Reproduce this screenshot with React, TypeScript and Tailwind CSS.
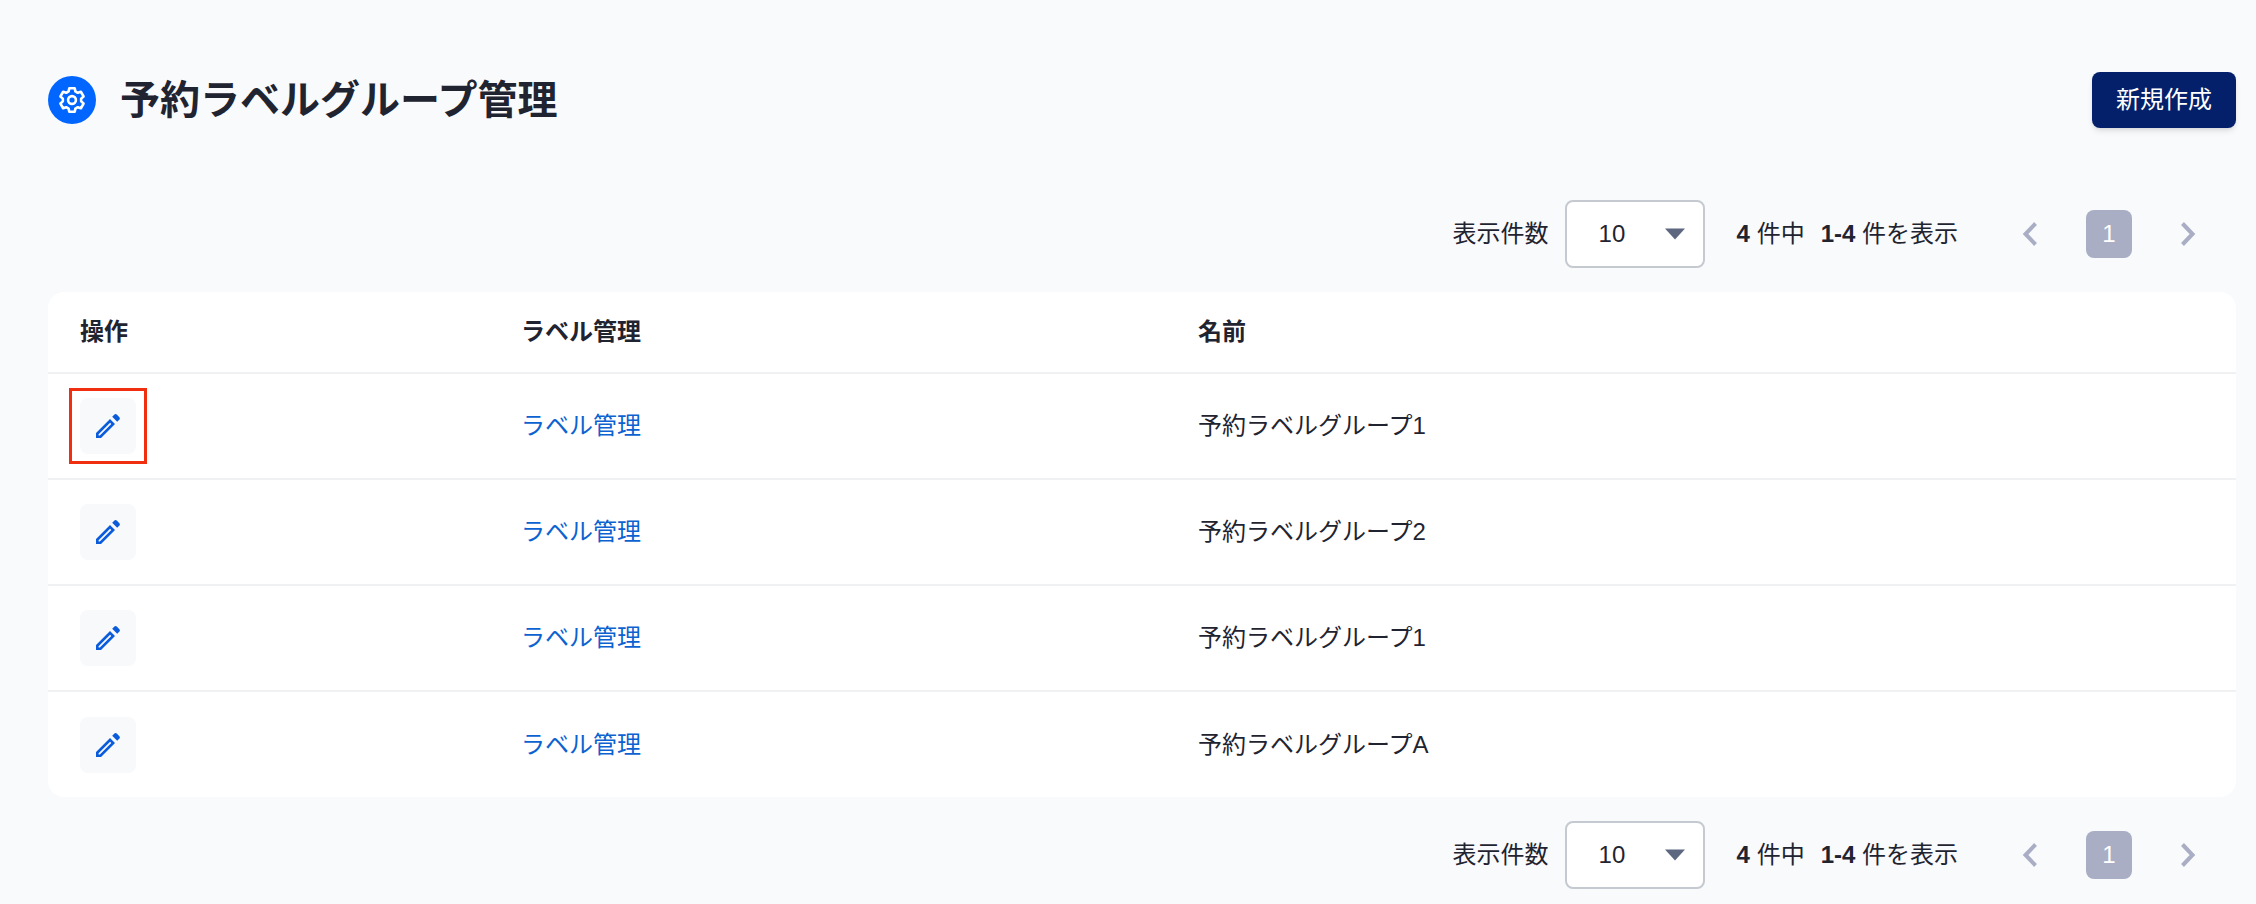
import { useId, type ReactNode } from "react";

type LabelGroup = {
  id: number;
  name: string;
  highlighted?: boolean;
};

const GROUPS: LabelGroup[] = [
  { id: 1, name: "予約ラベルグループ1", highlighted: true },
  { id: 2, name: "予約ラベルグループ2" },
  { id: 3, name: "予約ラベルグループ1" },
  { id: 4, name: "予約ラベルグループA" },
];

function GearIcon() {
  return (
    <svg
      viewBox="-16 -16 32 32"
      className="size-8 fill-none stroke-current stroke-[2.6]"
      strokeLinejoin="round"
      aria-hidden="true"
    >
      <path d="M-2.7-11.8h5.4l.7 3.2 2.35 1.36 3.12-1L11.57-3.56 9.15-1.36v2.72l2.42 2.2-2.7 4.68-3.12-1L3.4 8.6l-.7 3.2h-5.4l-.7-3.2-2.35-1.36-3.12 1-2.7-4.68 2.42-2.2v-2.72l-2.42-2.2 2.7-4.68 3.12 1L-3.4-8.6z" />
      <circle r="3.9" />
    </svg>
  );
}

function PencilIcon() {
  return (
    <svg viewBox="0 0 24 24" className="size-6 fill-[#0b5cdb]" aria-hidden="true">
      <path
        fillRule="evenodd"
        d="M0 19 14 5l5 5L5 24H0zM2.6 20.2v1.2h1.2L15.3 9.9l-1.2-1.2z"
      />
      <path d="m16.2 2.8 2-2a2 2 0 0 1 2.8 0l2.2 2.2a2 2 0 0 1 0 2.8l-2 2z" />
    </svg>
  );
}

function Chevron({ d }: { d: string }) {
  return (
    <svg viewBox="0 0 14 24" className="h-6 w-4 fill-none stroke-[#a9aec5] stroke-[4]" aria-hidden="true">
      <path d={d} />
    </svg>
  );
}

function Pager() {
  const selectId = useId();

  return (
    <div className="flex items-center justify-end pr-10">
      <label htmlFor={selectId}>表示件数</label>
      <div className="relative ml-4">
        <select
          id={selectId}
          defaultValue="10"
          className="h-17 w-35 appearance-none rounded-lg border-2 border-[#c5c9d0] bg-white pl-8"
        >
          <option>10</option>
          <option>20</option>
          <option>50</option>
        </select>
        <svg
          viewBox="0 0 18 10"
          className="pointer-events-none absolute top-1/2 right-5 h-3 w-5 -translate-y-1/2 fill-[#5d6780]"
          aria-hidden="true"
        >
          <path d="M0 0h18L9 10z" />
        </svg>
      </div>
      <p className="ml-8">
        <b>4</b> 件中
        <span className="ml-4">
          <b>1-4</b> 件を表示
        </span>
      </p>
      <nav className="ml-16 flex items-center gap-12" aria-label="ページ">
        <button type="button" aria-label="前へ">
          <Chevron d="M12.5 1.5 2.5 12l10 10.5" />
        </button>
        <button type="button" aria-current="page" className="h-12 w-[46px] rounded-lg bg-[#a9aec5] text-white">
          1
        </button>
        <button type="button" aria-label="次へ">
          <Chevron d="m1.5 1.5 10 10.5-10 10.5" />
        </button>
      </nav>
    </div>
  );
}

function HeadCell({ children }: { children: ReactNode }) {
  return (
    <th scope="col" className="h-[81px] px-8 text-left font-bold">
      {children}
    </th>
  );
}

function GroupRow({ group }: { group: LabelGroup }) {
  return (
    <tr className="border-t-2 border-[#f0f1f3]">
      <td className="h-[106px] px-8">
        <div className="relative w-fit">
          <button
            type="button"
            aria-label={`${group.name}を編集`}
            className="grid size-14 place-items-center rounded-lg bg-[#f8f9fb]"
          >
            <PencilIcon />
          </button>
          {group.highlighted && (
            <span className="pointer-events-none absolute -inset-x-[11px] -inset-y-[10px] border-3 border-[#ef2f10]" />
          )}
        </div>
      </td>
      <td className="px-8">
        <a href="#labels" className="text-[#0b62d0]">
          ラベル管理
        </a>
      </td>
      <td className="px-8">{group.name}</td>
    </tr>
  );
}

export default function App() {
  return (
    <main className="min-h-screen bg-[#f8fafc] pt-18 pr-5 pb-3 pl-12 font-['Liberation_Sans','Noto_Sans_CJK_JP',sans-serif] text-2xl text-[#1f2430]">
      <header className="flex items-center justify-between">
        <div className="flex items-center gap-6">
          <span className="grid size-12 place-items-center rounded-full bg-[#0066ff] text-white">
            <GearIcon />
          </span>
          <h1 className="text-[40px] leading-14 font-bold">予約ラベルグループ管理</h1>
        </div>
        <button type="button" className="h-14 rounded-lg bg-[#04206a] px-6 text-white shadow-md">
          新規作成
        </button>
      </header>

      <div className="mt-18">
        <Pager />
        <div className="my-6 overflow-hidden rounded-2xl bg-white">
          <table className="w-full table-fixed border-collapse">
            <colgroup>
              <col className="w-[441px]" />
              <col className="w-[677px]" />
              <col />
            </colgroup>
            <thead>
              <tr>
                <HeadCell>操作</HeadCell>
                <HeadCell>ラベル管理</HeadCell>
                <HeadCell>名前</HeadCell>
              </tr>
            </thead>
            <tbody>
              {GROUPS.map((group) => (
                <GroupRow key={group.id} group={group} />
              ))}
            </tbody>
          </table>
        </div>
        <Pager />
      </div>
    </main>
  );
}
